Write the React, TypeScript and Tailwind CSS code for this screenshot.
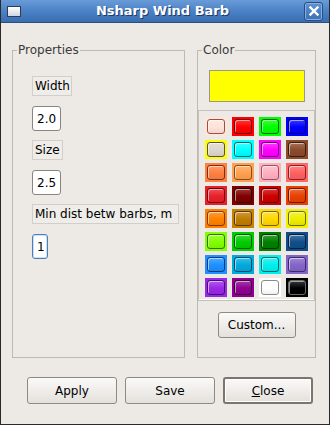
import React from "react";

const swatches = [
  { outer: "bg-[#ffe6dc]", inner: "bg-[#ffe2d8] border-[#a0503c]" },
  { outer: "bg-[#ff0000]", inner: "bg-[#ff0000] border-[#7a0000]" },
  { outer: "bg-[#00ff00]", inner: "bg-[#00ff00] border-[#006600]" },
  { outer: "bg-[#0000ff]", inner: "bg-[#0000ff] border-[#00007a]" },
  { outer: "bg-[#ffff00]", inner: "bg-[#dcd6cc] border-[#555040]" },
  { outer: "bg-[#00ffff]", inner: "bg-[#00ffff] border-[#006a6a]" },
  { outer: "bg-[#ff00ff]", inner: "bg-[#ff00ff] border-[#6a006a]" },
  { outer: "bg-[#8b4a2b]", inner: "bg-[#8b4a2b] border-[#3a1a0a]" },
  { outer: "bg-[#ff8040]", inner: "bg-[#ff7f40] border-[#7a3010]" },
  { outer: "bg-[#ffa050]", inner: "bg-[#ffa050] border-[#8a4a10]" },
  { outer: "bg-[#ffb0c0]", inner: "bg-[#ffb0c0] border-[#9a5060]" },
  { outer: "bg-[#ff6868]", inner: "bg-[#ff6060] border-[#8a2020]" },
  { outer: "bg-[#e8202a]", inner: "bg-[#e8202a] border-[#700010]" },
  { outer: "bg-[#800000]", inner: "bg-[#800000] border-[#300000]" },
  { outer: "bg-[#cc0000]", inner: "bg-[#cc0000] border-[#500000]" },
  { outer: "bg-[#e84000]", inner: "bg-[#e84000] border-[#701800]" },
  { outer: "bg-[#ff8000]", inner: "bg-[#ff8000] border-[#7a3a00]" },
  { outer: "bg-[#c88000]", inner: "bg-[#c07c00] border-[#5a3a00]" },
  { outer: "bg-[#ffd700]", inner: "bg-[#ffd700] border-[#7a6000]" },
  { outer: "bg-[#f0f000]", inner: "bg-[#eeee00] border-[#6a6a00]" },
  { outer: "bg-[#80ff00]", inner: "bg-[#80ff00] border-[#3a7000]" },
  { outer: "bg-[#00cc00]", inner: "bg-[#00cc00] border-[#005a00]" },
  { outer: "bg-[#008000]", inner: "bg-[#008000] border-[#003000]" },
  { outer: "bg-[#104e8b]", inner: "bg-[#104e8b] border-[#051e3a]" },
  { outer: "bg-[#1e90ff]", inner: "bg-[#1e90ff] border-[#0a3a7a]" },
  { outer: "bg-[#00aadd]", inner: "bg-[#00aadd] border-[#004a6a]" },
  { outer: "bg-[#00eeee]", inner: "bg-[#00eeee] border-[#006666]" },
  { outer: "bg-[#8464c8]", inner: "bg-[#8464c8] border-[#3a2a6a]" },
  { outer: "bg-[#9a28e8]", inner: "bg-[#9a28e8] border-[#40106a]" },
  { outer: "bg-[#900090]", inner: "bg-[#900090] border-[#3a003a]" },
  { outer: "bg-[#ffffff]", inner: "bg-[#ffffff] border-[#8a8a8a]" },
  { outer: "bg-[#000000]", inner: "bg-[#000000] border-[#6a6a6a]" },
];

function LabelBox({ text, w }: { text: string; w: string }) {
  return (
    <div
      className={`flex h-[20px] items-center border border-[#d2cfca] bg-[#efede9] pl-[2px] text-[12px] text-black ${w}`}
    >
      {text}
    </div>
  );
}

function Field({ value, w, focused }: { value: string; w: string; focused?: boolean }) {
  return (
    <div
      className={`flex h-[25px] items-center rounded-[3px] border bg-white pl-[4px] text-[12px] text-black ${w} ${
        focused ? "border-[#4a7fbf] shadow-[inset_0_0_0_1px_#cfe0f4]" : "border-[#8a857e]"
      }`}
    >
      {value}
    </div>
  );
}

function Button({ label, isDefault }: { label: React.ReactNode; isDefault?: boolean }) {
  return (
    <button
      className={`flex h-[27px] w-[90px] items-center justify-center rounded-[3px] bg-gradient-to-b from-[#fbfaf9] to-[#e4e1dc] text-[12px] text-black ${
        isDefault
          ? "border-2 border-[#7a756e] shadow-[inset_0_0_0_1px_#ffffff]"
          : "border border-[#8e8982]"
      }`}
    >
      {label}
    </button>
  );
}

export default function App() {
  return (
    <div className="h-[425px] w-[330px] overflow-hidden bg-[#edeae6] font-['DejaVu_Sans',sans-serif]">
      <div className="flex h-full flex-col border-x border-b border-[#2a2a2a]">
        {/* Title bar */}
        <div className="flex h-[23px] items-center border-b border-[#2c4e7e] bg-gradient-to-b from-[#6a9bd8] via-[#4a82c6] to-[#3a6db0] px-[6px]">
          <div className="h-[11px] w-[14px] border border-[#2e3e52] bg-gradient-to-b from-white to-[#cfd6de]" />
          <div className="flex-1 text-center text-[13px] font-bold text-white [text-shadow:1px_1px_0_#1d3a66]">
            Nsharp Wind Barb
          </div>
          <div className="flex h-[19px] w-[19px] items-center justify-center rounded-[3px] border border-[#2a4c80] shadow-[inset_0_0_0_1px_#86aee0]">
            <svg width="10" height="10" viewBox="0 0 10 10">
              <path d="M1.5 1.5 L8.5 8.5 M8.5 1.5 L1.5 8.5" stroke="white" strokeWidth="2.4" strokeLinecap="square" />
            </svg>
          </div>
        </div>

        {/* Body */}
        <div className="flex flex-1 flex-col px-[11px] pt-[20px]">
          <div className="flex h-[315px] gap-[12px]">
            <fieldset className="w-[173px] border border-[#bdbab4] pl-[19px]">
              <legend className="-ml-[15px] px-[1px] text-[12px] leading-[14px] text-[#3a3a3a]">Properties</legend>
              <div className="flex flex-col pt-[19px]">
                <LabelBox text="Width" w="w-[40px]" />
                <div className="mt-[10px]">
                  <Field value="2.0" w="w-[29px]" />
                </div>
                <div className="mt-[9px]">
                  <LabelBox text="Size" w="w-[31px]" />
                </div>
                <div className="mt-[10px]">
                  <Field value="2.5" w="w-[29px]" />
                </div>
                <div className="mt-[9px]">
                  <LabelBox text="Min dist betw barbs, m" w="w-[147px]" />
                </div>
                <div className="mt-[10px]">
                  <Field value="1" w="w-[16px]" focused />
                </div>
              </div>
            </fieldset>

            <fieldset className="w-[119px] border border-[#bdbab4]">
              <legend className="ml-[4px] px-[1px] text-[12px] leading-[14px] text-[#3a3a3a]">Color</legend>
              <div className="flex flex-col items-center pt-[13px]">
                <div className="h-[32px] w-[96px] border border-[#9a9690] bg-[#ffff00]" />
                <div className="mt-[8px] w-[117px] border border-[#c4c1bb] px-[6px] pb-[3px] pt-[6px] shadow-[inset_0_-1px_0_#ffffff]">
                  <div className="grid grid-cols-4 gap-x-[5px] gap-y-[4px]">
                    {swatches.map((s, i) => (
                      <div key={i} className={`h-[19px] w-[22px] p-[2px] ${s.outer}`}>
                        <div
                          className={`h-full w-full rounded-[3px] border ${s.inner} bg-[linear-gradient(to_bottom,rgba(255,255,255,0.22),rgba(255,255,255,0)_55%,rgba(0,0,0,0.06))] shadow-[inset_1px_1px_0_rgba(255,255,255,0.55)]`}
                        />
                      </div>
                    ))}
                  </div>
                </div>
                <button className="mt-[11px] flex h-[26px] w-[78px] items-center justify-center rounded-[3px] border border-[#8e8982] bg-gradient-to-b from-[#fbfaf9] to-[#e4e1dc] text-[12px] text-black">
                  Custom...
                </button>
              </div>
            </fieldset>
          </div>

          <div className="mt-[19px] flex justify-end gap-[8px] pr-[5px]">
            <Button label="Apply" />
            <Button label="Save" />
            <Button
              label={
                <span>
                  <span className="underline">C</span>lose
                </span>
              }
              isDefault
            />
          </div>
        </div>
      </div>
    </div>
  );
}
